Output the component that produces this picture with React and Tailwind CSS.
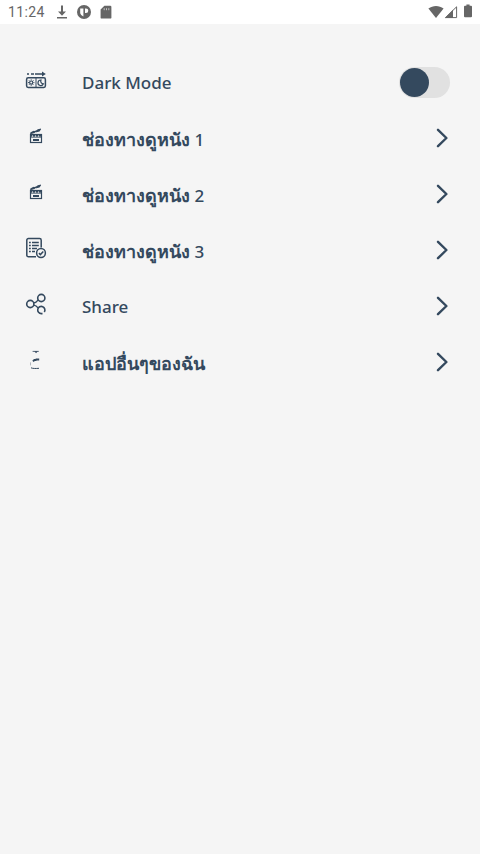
import { useState } from 'react'

function ThemeIcon() {
  return (
    <svg viewBox="0 0 24 24" className="size-6" fill="none" stroke="currentColor" aria-hidden="true">
      <path d="M3 5.9h2M7 5.9h3M11 5.9h8" strokeWidth="1.5" />
      <path d="M18 3.4v5l3.8-2.5z" fill="currentColor" stroke="none" />
      <rect x="2.6" y="9.8" width="18.8" height="9.6" rx="1.6" strokeWidth="1.5" />
      <path d="M12 10v9.2" strokeWidth="1" />
      <circle cx="7.2" cy="14.6" r="1.6" strokeWidth="1.2" />
      <path d="M7.2 11.4v1M7.2 16.8v1M4 14.6h1M9.4 14.6h1M5 12.4l.7.7M8.7 16.1l.7.7M5 16.8l.7-.7M8.7 13.1l.7-.7" strokeWidth="1" />
      <path d="M17 12a2.8 2.8 0 1 0 2.4 3.8 2.6 2.6 0 0 1-2.4-3.8z" strokeWidth="1.2" />
    </svg>
  )
}

function MovieIcon() {
  return (
    <svg viewBox="0 0 24 24" className="size-6" fill="none" stroke="currentColor" aria-hidden="true">
      <path d="M6.2 9.4 16.8 5.4" strokeWidth="1.4" />
      <path d="M6.6 10l.6-2 2.6-1.2 1.6.8-.8 1.4zM11.4 8.4l2-2.8 3.4-1.2-1.2 3z" fill="currentColor" stroke="none" />
      <rect x="6.5" y="10.5" width="11" height="8" strokeWidth="1.2" />
      <path d="M6 11.5h12" strokeWidth="2.4" strokeDasharray="2.4 0.6" />
      <path d="M9 16h6" strokeWidth="2" />
      <path d="M6.5 13.5h11" strokeWidth="0.6" />
    </svg>
  )
}

function DocumentIcon() {
  return (
    <svg viewBox="0 0 24 24" className="size-6" fill="none" stroke="currentColor" aria-hidden="true">
      <path d="M12 20.8H4.4a1.6 1.6 0 0 1-1.6-1.6V4.2a1.6 1.6 0 0 1 1.6-1.6h11.2a1.6 1.6 0 0 1 1.6 1.6v7.2" strokeWidth="1.5" />
      <path d="M5 6.5h1.8M8 6.5h6.8M5 9.5h1.8M8 9.5h6.8M5 12.5h1.8M8 12.5h5M5 15.5h1.8M8 15.5h3" strokeWidth="1.6" />
      <circle cx="17" cy="17" r="4.4" strokeWidth="1.5" />
      <path d="m14.9 17.1 1.5 1.5 2.9-3" strokeWidth="1.5" />
    </svg>
  )
}

function ShareIcon() {
  return (
    <svg viewBox="0 0 24 24" className="size-6" fill="none" stroke="currentColor" strokeWidth="1.6" aria-hidden="true">
      <circle cx="6.3" cy="12" r="3.6" />
      <circle cx="17.3" cy="6" r="3.6" />
      <path d="M20.3 20a3.6 3.6 0 1 0-3 1.6h1.2" />
      <path d="M9.6 10.9c2.2-.2 3.4-1.2 4.6-3M9.6 13.1c2.2.2 3.4 1.2 4.6 3" strokeWidth="1.4" />
    </svg>
  )
}

function AppsIcon() {
  return (
    <svg viewBox="0 0 24 24" className="size-6" fill="none" stroke="currentColor" aria-hidden="true">
      <path d="M8.6 3.4h6.2" strokeWidth="0.8" />
      <path d="M10.4 3.2h3.4L12 5.2z" fill="currentColor" stroke="none" />
      <path d="M9 13.4l1.4-1.4h1.4l.6-.6h2.8" strokeWidth="2" />
      <path d="M6.5 14.4v3" strokeWidth="0.6" opacity="0.6" />
      <path d="M7 19.8c1.4.8 5 .8 8 .5" strokeWidth="1" />
    </svg>
  )
}

function StatusBar() {
  return (
    <header className="flex h-6 items-center justify-between bg-white px-2 text-[#666]">
      <div className="flex items-center gap-1.5">
        <span className="w-10 whitespace-nowrap font-[Roboto,sans-serif] text-sm tracking-wide">11:24</span>
        <svg viewBox="0 0 16 16" className="size-4" fill="currentColor" aria-hidden="true">
          <path d="M7 1.5h2v6h3L8 11.8 4 7.5h3zM3 13h10v1.6H3z" />
        </svg>
        <svg viewBox="0 0 16 16" className="size-4" aria-hidden="true">
          <circle cx="8" cy="8" r="7" fill="currentColor" />
          <path d="M4.2 4.4h3.2v8a4.6 4.6 0 0 1-3.2-3.2zM9 4.4h1a2.3 2.3 0 0 1 0 4.6H9z" fill="#fff" />
        </svg>
        <svg viewBox="0 0 16 16" className="size-4" aria-hidden="true">
          <path d="M6.4 1.8h5.8a1.2 1.2 0 0 1 1.2 1.2v10.4a1.2 1.2 0 0 1-1.2 1.2H3.8a1.2 1.2 0 0 1-1.2-1.2V5.6z" fill="currentColor" />
          <path d="M6.2 4.2v2M8.5 4.2v2M10.8 4.2v2" stroke="#fff" strokeWidth="0.6" />
        </svg>
      </div>
      <div className="flex items-center">
        <svg viewBox="0 0 16 16" className="size-4" fill="currentColor" aria-hidden="true">
          <path d="M0.4 4.6C5 1.2 11 1.2 15.6 4.6L8 14z" />
        </svg>
        <svg viewBox="0 0 16 16" className="size-4" aria-hidden="true">
          <path d="M.8 14 9 5.8V14z" fill="currentColor" />
          <path d="M1.6 13.6 12.6 2.8v10.8z" fill="none" stroke="currentColor" strokeWidth="1" />
        </svg>
        <svg viewBox="0 0 8 16" className="ml-1 h-4 w-2" fill="currentColor" aria-hidden="true">
          <path d="M2.4 0.6h3.2v1.2H7a1 1 0 0 1 1 1v9.4a1 1 0 0 1-1 1H1a1 1 0 0 1-1-1V2.8a1 1 0 0 1 1-1h1.4z" />
        </svg>
      </div>
    </header>
  )
}

const links = [
  { thai: 'ช่องทางดูหนัง', latin: ' 1', icon: MovieIcon },
  { thai: 'ช่องทางดูหนัง', latin: ' 2', icon: MovieIcon },
  { thai: 'ช่องทางดูหนัง', latin: ' 3', icon: DocumentIcon },
  { latin: 'Share', icon: ShareIcon },
  { thai: 'แอปอื่นๆของฉัน', icon: AppsIcon },
]

export default function App() {
  const [dark, setDark] = useState(false)

  return (
    <div className="min-h-screen bg-[#f5f5f5] font-['Noto_Sans','Open_Sans',sans-serif] text-[#34495e]">
      <StatusBar />
      <main className="px-6 pt-7">
        <div className="flex h-14 items-center">
          <ThemeIcon />
          <label htmlFor="dark-mode" className="ml-[34px] flex-1 pt-1.5 text-[17px] leading-6 font-medium">
            Dark Mode
          </label>
          <input
            id="dark-mode"
            type="checkbox"
            role="switch"
            checked={dark}
            onChange={(e) => setDark(e.target.checked)}
            className="mr-1.5 mt-1 h-[31px] w-[51px] cursor-pointer appearance-none rounded-full bg-[#e1e1e1] p-px before:block before:size-[29px] before:rounded-full before:bg-[#34495e] checked:before:ml-5"
          />
        </div>
        <nav>
          {links.map(({ thai, latin, icon: Icon }, i) => (
            <a key={i} href="#" className="flex h-14 items-center">
              <Icon />
              <span className="ml-[34px] flex-1 pt-1.5 text-[17px] leading-6 font-medium">
                {thai && <span className="text-lg leading-6 font-semibold">{thai}</span>}
                {latin}
              </span>
              <svg
                viewBox="0 0 12 20"
                className="mr-2 mt-1 h-5 w-3"
                fill="none"
                stroke="currentColor"
                strokeWidth="2.4"
                strokeLinecap="round"
                strokeLinejoin="round"
                aria-hidden="true"
              >
                <path d="m2 1.8 8.4 8.2L2 18.2" />
              </svg>
            </a>
          ))}
        </nav>
      </main>
    </div>
  )
}
